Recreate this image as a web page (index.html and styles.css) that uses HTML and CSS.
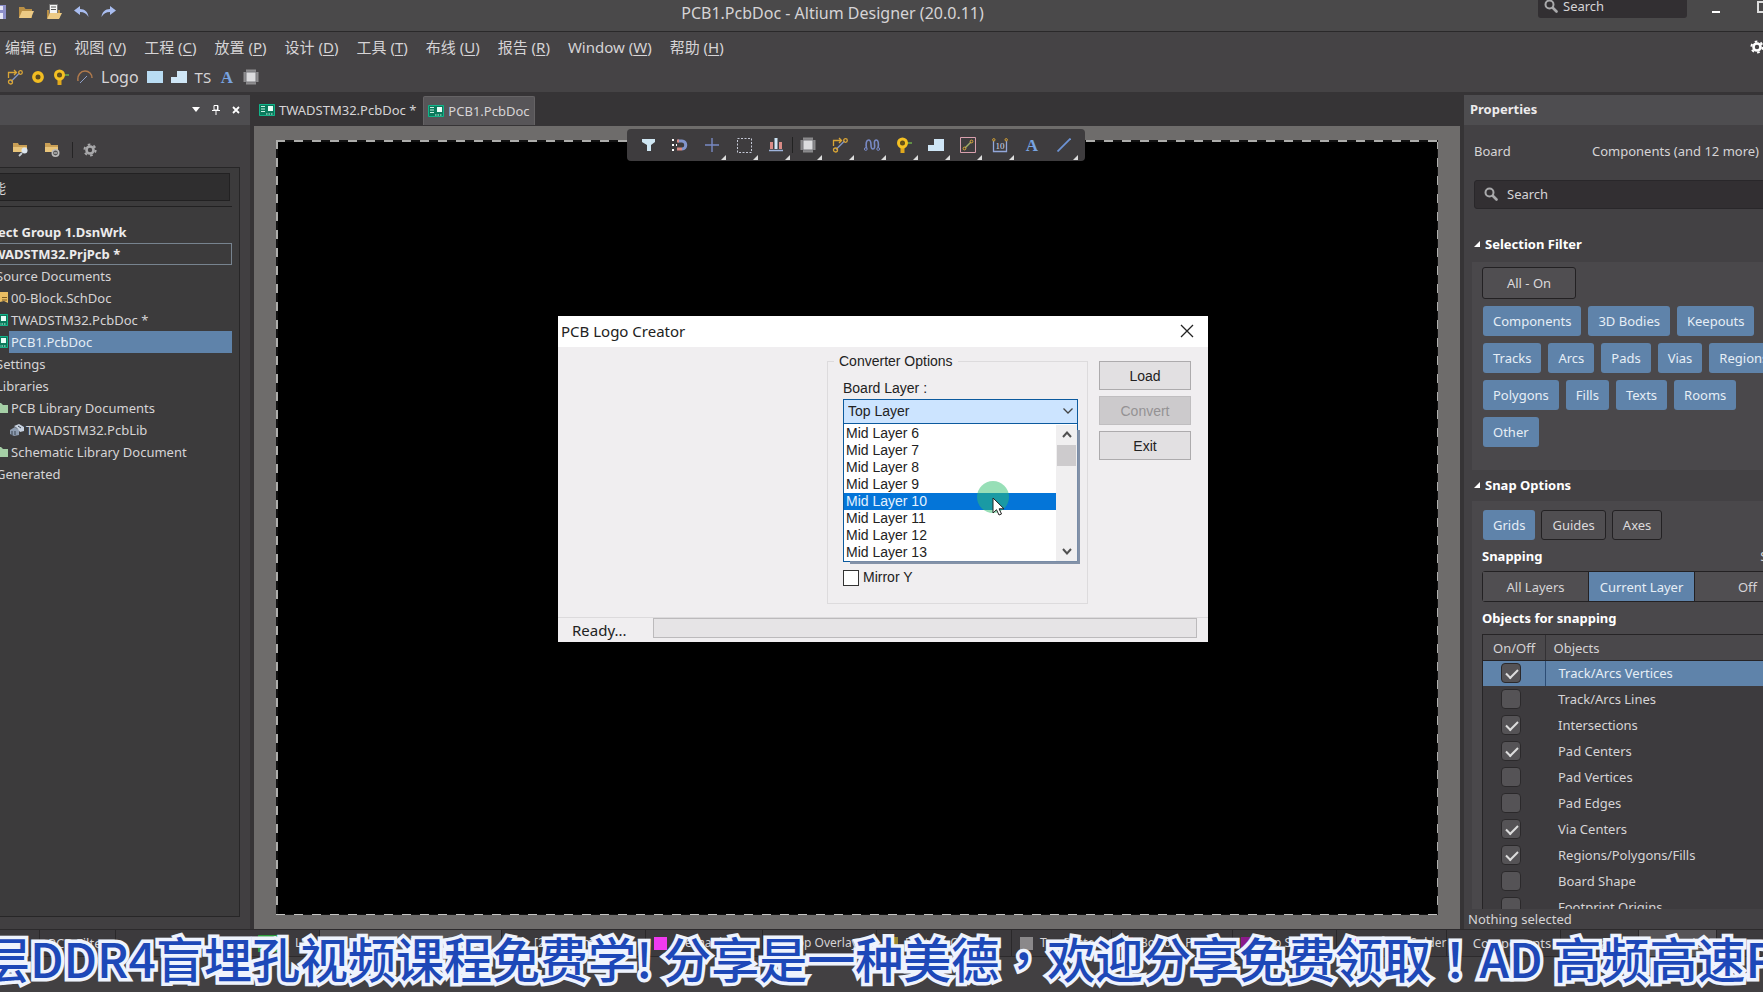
FILE: index.html
```html
<!DOCTYPE html>
<html lang="zh-CN">
<head>
<meta charset="utf-8">
<title>PCB1.PcbDoc - Altium Designer (20.0.11)</title>
<link rel="stylesheet" href="styles.css">
</head>
<body>
<svg class="defs" aria-hidden="true">
  <symbol id="pcb" viewBox="0 0 16 12"><path fill="#0b7a5c" d="M0 0h16v12H0z"/><path stroke="#c9f3e4" d="M2 2.500h4M2 5h4M2 7.500h4M7 10h1.500M9.500 10H11M12 10h1.500"/><path fill="#e8fff8" d="M9 2h5v5H9z"/><path fill="none" stroke="#12b48a" d="M.5.500h15v11H.5z"/></symbol>
  <symbol id="folder" viewBox="0 0 16 14"><path fill="#b98f45" d="M1 2h5l1.500 2H14v9H1z"/><path fill="#ecca85" d="M4 6h12l-3 7H1z"/></symbol>
  <symbol id="route" viewBox="0 0 16 16"><path fill="none" stroke="#d9a536" stroke-width="1.300" d="M1.500 9V3.500H9M7 1l2.500 2.500L7 6"/><path stroke="#7f93c4" stroke-width="1.500" d="M4 12.500 12.500 4"/><circle cx="3.500" cy="13" r="2" fill="none" stroke="#d9a536" stroke-width="1.300"/><circle cx="13.500" cy="3.500" r="1.800" fill="none" stroke="#d9a536" stroke-width="1.300"/></symbol>
  <symbol id="pad" viewBox="0 0 16 16"><path stroke="#6fae4a" stroke-width="1.500" d="M10 6h6"/><path fill="#e0a81c" d="M4.500 8h4v8h-4z"/><circle cx="6.500" cy="6" r="4" fill="#5a4a20" stroke="#f4c022" stroke-width="3"/><circle cx="6.500" cy="6" r="1.500" fill="#6b5413"/></symbol>
  <symbol id="via" viewBox="0 0 14 14"><circle cx="7" cy="7" r="4.200" fill="#5a4a20" stroke="#f2bd22" stroke-width="3.400"/></symbol>
  <symbol id="chip" viewBox="0 0 16 16"><path stroke="#d8d8da" stroke-width="1" d="M4 .5v15M6 .5v15M8 .5v15M10 .5v15M12 .5v15M.5 4h15M.5 6h15M.5 8h15M.5 10h15M.5 12h15"/><path fill="#dcdcde" stroke="#77777a" d="M3 3h10v10H3z"/></symbol>
  <symbol id="region" viewBox="0 0 16 12"><path fill="#cfe6f6" d="M6 0h10v12H0V6h6z"/></symbol>
  <symbol id="letter" viewBox="0 0 16 16"><text x="8" y="14" text-anchor="middle" class="glyph-a">A</text></symbol>
  <symbol id="lens" viewBox="0 0 14 14"><circle cx="5.500" cy="5.500" r="4" fill="none" stroke="#a9a9ab" stroke-width="2"/><path stroke="#a9a9ab" stroke-width="2.600" stroke-linecap="round" d="m9 9 3.500 3.500"/></symbol>
  <symbol id="gear" viewBox="0 0 14 14"><circle cx="7" cy="7" r="3.500" fill="none" stroke="currentColor" stroke-width="2.600"/><circle cx="7" cy="7" r="5.600" fill="none" stroke="currentColor" stroke-width="2" stroke-dasharray="2.600 3.264"/></symbol>
  <symbol id="fold" viewBox="0 0 6 6"><path fill="#fff" d="M6 0v6H0z"/></symbol>
</svg>

<header class="titlebar">
  <div class="quick">
    <button aria-label="Save"><svg width="14" height="14" viewBox="0 0 14 14"><path fill="#8d8fc9" d="M0 0h14v14H0z"/><path fill="#e6e6f5" d="M3 1h8v4H3zM3 8h3v6H3zM8 8h3v6H8z"/></svg></button>
    <button aria-label="Open"><svg width="16" height="14"><use href="#folder"/></svg></button>
    <button aria-label="Open project"><svg width="16" height="15" viewBox="0 0 16 15"><path fill="#b98f45" d="M1 6h13v8H1z"/><path fill="#f4f4f4" stroke="#777" d="M3.500.500h8v9h-8z"/><path stroke="#555" d="M5 3h5M5 5.500h5"/><path fill="#ecca85" d="M4 9h12l-3 6H1z"/></svg></button>
    <button aria-label="Undo"><svg width="15" height="12" viewBox="0 0 15 12"><path fill="#a9bdf0" d="M0 4.500 6 0v3c5 0 8 3 8.500 8C12.500 7.500 10 6 6 6v3z"/></svg></button>
    <button aria-label="Redo"><svg width="15" height="12" viewBox="0 0 15 12"><path fill="#a9bdf0" d="M15 4.500 9 0v3c-5 0-8 3-8.500 8C2.500 7.500 5 6 9 6v3z"/></svg></button>
  </div>
  <h1 class="app-title">PCB1.PcbDoc - Altium Designer (20.0.11)</h1>
  <div class="window-tools">
    <label class="top-search"><svg width="14" height="14"><use href="#lens"/></svg><input type="text" placeholder="Search" aria-label="Search"></label>
    <button class="minimise" aria-label="Minimise"></button>
    <button class="maximise" aria-label="Maximise"></button>
  </div>
</header>

<nav class="menubar">
  <button>编辑 (<u>E</u>)</button><button>视图 (<u>V</u>)</button><button>工程 (<u>C</u>)</button><button>放置 (<u>P</u>)</button><button>设计 (<u>D</u>)</button><button>工具 (<u>T</u>)</button><button>布线 (<u>U</u>)</button><button>报告 (<u>R</u>)</button><button>Window (<u>W</u>)</button><button>帮助 (<u>H</u>)</button>
  <button class="settings" aria-label="Settings"><svg width="14" height="14"><use href="#gear"/></svg></button>
</nav>

<div class="toolbar">
  <button aria-label="Route"><svg width="16" height="16"><use href="#route"/></svg></button>
  <button aria-label="Via"><svg width="14" height="14"><use href="#via"/></svg></button>
  <button aria-label="Pad"><svg width="16" height="16"><use href="#pad"/></svg></button>
  <button aria-label="Arc"><svg width="16" height="14" viewBox="0 0 16 14"><path fill="none" stroke="#b07a4c" stroke-width="1.500" d="M1 11C0 5 4 1 8 1s7 3 7 7"/><path stroke="#8fa0c8" d="m3 13 7-7"/></svg></button>
  <button class="logo-label">Logo</button>
  <button aria-label="Fill"><svg width="16" height="12"><path fill="#b9dcf3" d="M0 0h16v12H0z"/></svg></button>
  <button aria-label="Polygon"><svg width="16" height="12"><use href="#region"/></svg></button>
  <button class="ts-label">TS</button>
  <button aria-label="Text"><svg width="16" height="16"><use href="#letter"/></svg></button>
  <button aria-label="Component"><svg width="16" height="16"><use href="#chip"/></svg></button>
</div>

<main class="workspace">
  <aside class="projects">
    <div class="panel-head panel-actions">
      <button aria-label="Panel menu"><svg width="8" height="6"><path fill="#fff" d="M0 0h8L4 5z"/></svg></button>
      <button aria-label="Pin"><svg width="8" height="10" viewBox="0 0 8 10"><path fill="none" stroke="#fff" d="M2 .5h4V5H2zM0 5.500h8M4 5.500V10M5.500 1v4"/></svg></button>
      <button aria-label="Close panel"><svg width="8" height="8"><path stroke="#fff" stroke-width="1.800" d="m1 1 6 6M7 1 1 7"/></svg></button>
    </div>
    <div class="project-tools">
      <button aria-label="Browse"><svg width="17" height="15" viewBox="0 0 17 15"><path fill="#c99f55" d="M1 1h5l1 2h8v7H1z"/><path fill="#e8c47a" d="M1 5h14v5H1z"/><circle cx="12.500" cy="8.500" r="3" fill="#dde6ee"/><path stroke="#c4ccd4" stroke-width="1.800" d="m10 11-3 3"/></svg></button>
      <button aria-label="Folder options"><svg width="17" height="16" viewBox="0 0 17 16"><path fill="#c99f55" d="M1 1h5l1 2h7v7H1z"/><path fill="#e8c47a" d="M1 5h13v5H1z"/><circle cx="11.500" cy="11" r="3.200" fill="#555" stroke="#bbb" stroke-width="1.600"/><path stroke="#ddd" d="M10 11h3"/></svg></button>
      <span class="tool-rule"></span>
      <button class="grey" aria-label="Options"><svg width="14" height="14"><use href="#gear"/></svg></button>
    </div>
    <div class="project-box">
      <input class="project-search" type="text" value="能" aria-label="搜索">
      <ul class="tree">
        <li class="strong">ect Group 1.DsnWrk</li>
        <li class="strong outlined">WADSTM32.PrjPcb *</li>
        <li>Source Documents</li>
        <li><svg width="12" height="12" viewBox="0 0 12 12"><path fill="#e9bd62" d="M0 0h12v11L8 9l-8 2z"/><path stroke="#7a5a20" d="M6 5.500h5M6 8h5"/></svg>00-Block.SchDoc</li>
        <li><svg width="12" height="12" viewBox="4 0 12 12"><use href="#pcb" width="16" height="12"/></svg>TWADSTM32.PcbDoc *</li>
        <li class="chosen"><svg width="12" height="12" viewBox="4 0 12 12"><use href="#pcb" width="16" height="12"/></svg><span>PCB1.PcbDoc</span></li>
        <li>Settings</li>
        <li>Libraries</li>
        <li><svg width="12" height="10"><path fill="#a5cfa6" d="M0 0h5l2 2h5v8H0z"/></svg>PCB Library Documents</li>
        <li class="nested"><svg width="14" height="12" viewBox="0 0 14 12"><path fill="#8e9cb0" d="m0 6 5-3 4 3v5l-5 1-4-2z"/><path fill="#c8d2e0" d="m4 2 5-2 5 3v4l-4 1-3-4z"/><path stroke="#39424f" d="M2 7v4M5 7v4M8 2l3 2"/></svg>TWADSTM32.PcbLib</li>
        <li><svg width="12" height="10"><path fill="#a5cfa6" d="M0 0h5l2 2h5v8H0z"/></svg>Schematic Library Document</li>
        <li>Generated</li>
      </ul>
    </div>
  </aside>

  <section class="editor">
    <div class="doc-tabs">
      <button><svg width="16" height="12"><use href="#pcb"/></svg>TWADSTM32.PcbDoc *</button>
      <button class="current"><svg width="16" height="12"><use href="#pcb"/></svg>PCB1.PcbDoc</button>
    </div>
    <div class="canvas">
      <div class="board"></div>

      <div class="floatbar">
        <button aria-label="Filter"><svg width="13" height="12"><path fill="#cfe6f2" d="M0 0h13v3L9 6v6H5V6L0 3z"/></svg></button>
        <button aria-label="Snap"><svg width="16" height="14" viewBox="0 0 16 14"><path fill="none" stroke="#8295cc" stroke-width="3" d="M6 3h4c5 0 5 8 0 8"/><path stroke="#d78a83" stroke-width="3" d="M5 11h5M5 3h2"/><path fill="#fff" d="M0 1h2v2H0zM0 6h2v2H0zM0 11h2v2H0zM4 6h1v2H4z"/></svg></button>
        <button class="more" aria-label="Origin"><svg width="14" height="14"><path stroke="#7889c4" stroke-width="1.400" d="M7 0v14M0 7h14"/></svg></button>
        <button class="more" aria-label="Select area"><svg width="15" height="15"><path fill="none" stroke="#c5c8d6" stroke-dasharray="2 1.500" d="M.5.500h14v14H.5z"/></svg></button>
        <button class="more" aria-label="Align"><svg width="14" height="14"><path fill="#d98b86" d="M1 4h3v7H1zM10 4h3v7h-3z"/><path fill="#cfe6f6" d="M5.500 0h3v11h-3z"/><path stroke="#9fb4dc" stroke-width="1.500" d="M0 12.500h14"/></svg></button>
        <button class="more split" aria-label="Component"><svg width="16" height="16"><use href="#chip"/></svg></button>
        <button class="more" aria-label="Route"><svg width="16" height="16"><use href="#route"/></svg></button>
        <button class="more" aria-label="Tune"><svg width="16" height="12" viewBox="0 0 16 12"><path fill="none" stroke="#7889c4" stroke-width="1.600" d="M2.500 9.500C1.500 4 2.500 1 4.500 1S7 3 7 6s.5 4 2 4 2-2 1.500-5 .5-4 2-4 2.500 3 1.500 8"/><circle cx="1.800" cy="10" r="1.400" fill="none" stroke="#7889c4"/><circle cx="14.200" cy="10" r="1.400" fill="none" stroke="#7889c4"/></svg></button>
        <button class="more" aria-label="Pad"><svg width="16" height="16"><use href="#pad"/></svg></button>
        <button class="more" aria-label="Polygon"><svg width="16" height="12"><use href="#region"/></svg></button>
        <button class="more" aria-label="Keepout"><svg width="16" height="16"><path fill="none" stroke="#d9a0ae" d="M.5.500h15v15H.5z"/><path stroke="#9fae6a" stroke-width="1.400" d="m5 11 6-6"/><circle cx="4.500" cy="11.500" r="1.400" fill="none" stroke="#d9a536"/><circle cx="11.500" cy="4.500" r="1.400" fill="none" stroke="#d9a536"/></svg></button>
        <button class="more" aria-label="Dimension"><svg width="16" height="15" viewBox="0 0 16 15"><path fill="none" stroke="#93a7da" stroke-width="1.300" d="M1.500 3v10.500h13V3"/><circle cx="1.800" cy="1.800" r="1.200" fill="none" stroke="#d9a536"/><circle cx="14.200" cy="1.800" r="1.200" fill="none" stroke="#d9a536"/><text x="8" y="11" text-anchor="middle" class="glyph-ten">10</text></svg></button>
        <button aria-label="Text"><svg width="16" height="16"><use href="#letter"/></svg></button>
        <button class="more" aria-label="Line"><svg width="14" height="14"><path stroke="#6d93d6" stroke-width="1.800" d="M.5 13.500 13.500.500"/></svg></button>
      </div>

      <div class="dialog" role="dialog" aria-label="PCB Logo Creator">
        <div class="dialog-title"><span>PCB Logo Creator</span><button aria-label="Close"><svg width="14" height="14"><path stroke="#222" stroke-width="1.300" d="m1 1 12 12M13 1 1 13"/></svg></button></div>
        <div class="dialog-body">
          <fieldset>
            <legend>Converter Options</legend>
            <label for="layer">Board Layer :</label>
            <div class="combo">
              <select id="layer"><option>Top Layer</option></select>
              <svg class="combo-arrow" width="10" height="6"><path fill="none" stroke="#444" stroke-width="1.300" d="m.5.500 4.500 4.500L9.500.500"/></svg>
              <div class="drop">
                <ul role="listbox" aria-label="Board Layer">
                  <li>Mid Layer 6</li><li>Mid Layer 7</li><li>Mid Layer 8</li><li>Mid Layer 9</li><li class="hot">Mid Layer 10</li><li>Mid Layer 11</li><li>Mid Layer 12</li><li>Mid Layer 13</li>
                </ul>
                <div class="scroll">
                  <svg width="10" height="7"><path fill="none" stroke="#505050" stroke-width="2" d="m1 6 4-4.500L9 6"/></svg>
                  <span class="thumb"></span>
                  <svg class="down" width="10" height="7"><path fill="none" stroke="#505050" stroke-width="2" d="m1 1 4 4.500L9 1"/></svg>
                </div>
                <span class="click-halo"></span>
                <svg class="pointer" width="13" height="19" viewBox="0 0 13 19"><path fill="#fff" stroke="#222" d="M1 1v15l3.500-3.300L7 18l2.500-1-2.400-5.200H12z"/></svg>
              </div>
            </div>
            <label class="mirror"><input type="checkbox">Mirror Y</label>
          </fieldset>
          <div class="dialog-buttons"><button>Load</button><button disabled>Convert</button><button>Exit</button></div>
        </div>
        <div class="dialog-status"><span>Ready...</span><div class="progress" role="progressbar" aria-label="Progress"></div></div>
      </div>
    </div>
  </section>

  <aside class="properties">
    <h2 class="panel-head">Properties</h2>
    <div class="prop-scope"><span>Board</span><span>Components (and 12 more)</span></div>
    <label class="prop-search"><svg width="14" height="14"><use href="#lens"/></svg><input type="text" placeholder="Search" aria-label="Search properties"></label>
    <h3><svg width="6" height="6"><use href="#fold"/></svg>Selection Filter</h3>
    <div class="group filter">
      <button class="chip off wide">All - On</button>
      <div class="chips"><button class="chip">Components</button><button class="chip">3D Bodies</button><button class="chip">Keepouts</button></div>
      <div class="chips"><button class="chip">Tracks</button><button class="chip">Arcs</button><button class="chip">Pads</button><button class="chip">Vias</button><button class="chip">Regions</button></div>
      <div class="chips"><button class="chip">Polygons</button><button class="chip">Fills</button><button class="chip">Texts</button><button class="chip">Rooms</button></div>
      <div class="chips"><button class="chip">Other</button></div>
    </div>
    <h3><svg width="6" height="6"><use href="#fold"/></svg>Snap Options</h3>
    <div class="group snap">
      <div class="chips"><button class="chip">Grids</button><button class="chip off">Guides</button><button class="chip off">Axes</button></div>
      <div class="snap-head"><h4>Snapping</h4><span>Shift</span></div>
      <div class="segments"><button>All Layers</button><button class="on">Current Layer</button><button>Off</button></div>
      <h4>Objects for snapping</h4>
      <div class="table-wrap">
        <table>
          <thead><tr><th>On/Off</th><th>Objects</th></tr></thead>
          <tbody>
            <tr class="picked"><td><input id="o1" type="checkbox" checked></td><td><label for="o1">Track/Arcs Vertices</label></td></tr>
            <tr><td><input id="o2" type="checkbox"></td><td><label for="o2">Track/Arcs Lines</label></td></tr>
            <tr><td><input id="o3" type="checkbox" checked></td><td><label for="o3">Intersections</label></td></tr>
            <tr><td><input id="o4" type="checkbox" checked></td><td><label for="o4">Pad Centers</label></td></tr>
            <tr><td><input id="o5" type="checkbox"></td><td><label for="o5">Pad Vertices</label></td></tr>
            <tr><td><input id="o6" type="checkbox"></td><td><label for="o6">Pad Edges</label></td></tr>
            <tr><td><input id="o7" type="checkbox" checked></td><td><label for="o7">Via Centers</label></td></tr>
            <tr><td><input id="o8" type="checkbox" checked></td><td><label for="o8">Regions/Polygons/Fills</label></td></tr>
            <tr><td><input id="o9" type="checkbox"></td><td><label for="o9">Board Shape</label></td></tr>
            <tr><td><input id="o10" type="checkbox"></td><td><label for="o10">Footprint Origins</label></td></tr>
          </tbody>
        </table>
      </div>
    </div>
    <p class="selected-note">Nothing selected</p>
  </aside>
</main>

<footer class="bottom">
  <div class="bottom-tabs">
    <div class="left-tabs"><button></button><button>PCB Filter</button></div>
    <div class="layer-tabs">
      <button class="layer-set"><i class="green"></i>LS</button>
      <button class="layer-top current">[1] Top Layer</button>
      <button class="layer-bottom">[2] Bottom Layer</button>
      <button class="layer-mech"><i class="magenta"></i>Mechanical 1</button>
      <button class="layer-over"><i class="yellow"></i>Top Overlay</button>
      <button class="layer-bover"><i class="olive"></i>Bottom Overlay</button>
      <button class="layer-paste"><i class="gray"></i>Top Paste</button>
      <button class="layer-bpaste"><i class="maroon"></i>Bottom Paste</button>
      <button class="layer-solder"><i class="purple"></i>Top Solder</button>
      <button class="layer-bsolder"><i class="magenta"></i>Bottom Solder</button>
    </div>
    <div class="right-tabs"><button>Components</button><button>Messages</button><button class="current">Properties</button><button></button></div>
  </div>
</footer>

<div class="caption">层DDR4盲埋孔视频课程免费学! 分享是一种美德<span lang="zh-TW">，</span>欢迎分享免费领取<span lang="zh-TW">！</span>AD 高频高速PCB</div>
</body>
</html>
```
FILE: styles.css
```css
* { box-sizing: border-box; }
body {
  margin: 0;
  height: 100vh;
  display: flex;
  flex-direction: column;
  position: relative;
  overflow: hidden;
  background: #454345;
  color: #d6d4d6;
  font: 13px/20px "Noto Sans", "Noto Sans CJK SC", sans-serif;
  white-space: nowrap;
}
button {
  margin: 0;
  padding: 0;
  border: 0;
  background: none;
  color: inherit;
  font: inherit;
  display: flex;
  align-items: center;
  justify-content: center;
  flex: none;
}
input { font: inherit; color: inherit; }
svg { flex: none; display: block; }
ul { margin: 0; padding: 0; list-style: none; }
h1, h2, h3, h4, p { margin: 0; font: inherit; }
.defs { position: absolute; width: 0; height: 0; }
.glyph-a { font: bold 17px "Liberation Serif", serif; fill: #78a4e0; }
.glyph-ten { font: 9px "Liberation Serif", serif; fill: #d4dcf0; }

/* Title bar */
.titlebar {
  flex: none;
  height: 32px;
  display: grid;
  grid-template-columns: 1fr auto 1fr;
  background: #4a494a;
  border-bottom: 1px solid #2a292a;
}
.quick { display: flex; align-items: center; gap: 12px; margin-left: -8px; padding-bottom: 8px; }
.app-title { font-size: 16px; line-height: 26px; padding-right: 98px; }
.window-tools { display: flex; justify-content: flex-end; align-items: flex-start; }
.top-search {
  display: flex;
  align-items: center;
  gap: 5px;
  width: 149px;
  height: 18px;
  padding: 0 6px 6px;
  background: #322f32;
  border-radius: 0 0 3px 3px;
}
.top-search input, .prop-search input {
  width: 100px;
  padding: 0;
  border: 0;
  outline: 0;
  background: none;
}
input::placeholder { color: #d6d4d6; opacity: 1; }
.minimise { width: 8px; height: 2px; background: #fff; margin: 11px 37px 0 25px; }
.maximise { width: 12px; height: 12px; border: 2px solid #ddd; margin: 1px -6px 0 0; }

/* Menus */
.menubar { flex: none; height: 31px; display: flex; align-items: center; gap: 18px; padding: 0 0 2px 5px; font-size: 15px; }
.menubar u { text-underline-offset: 2px; }
.settings { margin-left: auto; margin-right: -1px; color: #fff; }
.toolbar { flex: none; height: 32px; display: flex; align-items: center; gap: 8px; padding: 0 0 2px 7px; font-size: 15px; border-bottom: 3px solid #363436; }
.logo-label { font-size: 16px; }

/* Workspace */
.workspace { flex: 1; min-height: 0; display: flex; background: #363436; }
.panel-head { height: 30px; background: #4e4d50; flex: none; }
.projects { flex: none; width: 250px; margin-right: 4px; display: flex; flex-direction: column; background: #413f41; overflow: hidden; }
.panel-actions { display: flex; align-items: center; justify-content: flex-end; gap: 12px; padding-right: 10px; }
.project-tools { height: 42px; display: flex; align-items: center; gap: 15px; padding: 7px 0 0 12px; }
.tool-rule { width: 1px; height: 16px; background: #252425; margin: 0 -5px 0 -4px; }
.grey { color: #a8a8aa; }
.project-box { flex: 1; margin: 0 10px 12px 0; border: 1px solid #272627; border-left: 0; background: #3c3b3c; }
.project-search { display: block; width: 231px; height: 28px; margin-top: 5px; margin-left: -1px; padding: 0; border: 1px solid #222122; background: #2f2e2f; text-indent: -7px; }
.tree { margin: 5px 7px 0 0; padding-top: 14px; border-top: 1px solid #222122; }
.tree li { display: flex; align-items: center; height: 22px; gap: 3px; margin-left: -4px; }
.tree .strong { font-weight: bold; color: #ecebec; margin-left: -2px; }
.tree .outlined { border: 1px solid #77838f; text-indent: -6px; }
.tree .nested { padding-left: 14px; gap: 2px; }
.tree .chosen { gap: 1px; }
.chosen span { flex: 1; padding-left: 2px; line-height: 22px; background: #5f83aa; color: #e4edf6; }

/* Editor */
.editor { flex: 1; min-width: 0; display: flex; flex-direction: column; }
.doc-tabs { flex: none; height: 31px; display: flex; align-items: stretch; gap: 2px; padding: 1px 0 1px 5px; }
.doc-tabs button { gap: 4px; padding: 0 5px 2px 0; }
.doc-tabs .current { padding: 0 4px 1px; background: #575558; border: 1px solid #656365; border-radius: 2px 2px 0 0; border-bottom: 0; }
.canvas { flex: 1; min-height: 0; position: relative; padding: 14px 22px 14px 22px; background: #6e6c6b; display: flex; }
.board {
  flex: 1;
  background:
    repeating-linear-gradient(90deg, #adadab 0 9px, #111 9px 18px) top / 100% 2px no-repeat,
    repeating-linear-gradient(90deg, #c4c4c2 0 9px, #111 9px 18px) bottom / 100% 1px no-repeat,
    repeating-linear-gradient(180deg, #adadab 0 9px, #111 9px 18px) left / 2px 100% no-repeat,
    repeating-linear-gradient(180deg, #adadab 0 9px, #111 9px 18px) right / 1px 100% no-repeat,
    #000;
}
.floatbar { position: absolute; left: 373px; top: 3px; display: flex; padding: 0 5px; height: 32px; background: #3e3c3e; border-radius: 4px; }
.floatbar button { position: relative; width: 32px; height: 32px; }
.floatbar .more::after { content: ""; position: absolute; right: 2px; bottom: 1px; border: solid transparent; border-width: 0 0 5px 5px; border-bottom-color: #ddd; }
.floatbar .split::before { content: ""; position: absolute; left: 0; top: 8px; width: 1px; height: 16px; background: #222; }

/* Dialog */
.dialog { position: absolute; left: 304px; top: 190px; width: 650px; background: #f0eef0; color: #222; font: 14px/17px "Liberation Sans", Arial, sans-serif; }
.dialog-title { display: flex; justify-content: space-between; align-items: center; height: 31px; padding: 0 14px 2px 3px; background: #fff; font: 15px/20px "Noto Sans", sans-serif; }
.dialog-body { display: flex; justify-content: flex-end; align-items: flex-start; gap: 11px; height: 270px; padding: 6px 17px 0 0; }
fieldset { width: 260px; height: 251px; margin: 0; padding: 9px 9px 0 15px; border: 1px solid #dddbdd; }
legend { padding: 0 5px; margin-left: -9px; }
fieldset label { display: block; line-height: 19px; }
.combo { position: relative; width: 235px; margin-top: 1px; }
.combo select { display: block; appearance: none; width: 100%; height: 25px; padding: 0 4px; border: 1px solid #0c5a9e; border-radius: 0; background: #cce4ff; font: inherit; color: #222; outline: 0; }
.combo-arrow { position: absolute; right: 5px; top: 9px; }
.drop { position: absolute; z-index: 1; left: 0; top: 24px; width: 100%; display: flex; padding-top: 1px; background: #fff; border: 1px solid #0c5a9e; }
.drop::before { content: ""; position: absolute; z-index: -1; left: 6px; top: 6px; right: -3px; bottom: -3px; box-shadow: inset -3px -3px 1px #8492a8; }
.drop ul { flex: 1; background: #fff; }
.drop li { padding-left: 2px; }
.hot { background: #0475d8; color: #e4f2ff; }
.scroll { width: 21px; display: flex; flex-direction: column; align-items: center; padding: 6px 0; background: #f0eff0; }
.thumb { width: 19px; height: 21px; margin-top: 7px; background: #cdcbcd; }
.down { margin-top: auto; }
.click-halo { position: absolute; left: 133px; top: 57px; width: 32px; height: 32px; border-radius: 50%; background: #30c07080; }
.pointer { position: absolute; left: 148px; top: 73px; }
fieldset .mirror { display: flex; align-items: center; gap: 4px; margin-top: 144px; }
.mirror input { appearance: none; width: 16px; height: 16px; margin: 0; border: 1px solid #333; background: #fff; }
.dialog-buttons { display: flex; flex-direction: column; gap: 6px; padding-top: 8px; }
.dialog-buttons button { width: 92px; height: 29px; padding-top: 1px; border: 1px solid #adabad; background: #e2e0e2; }
.dialog-buttons button:disabled { background: #cccacc; border-color: #c0bec0; color: #949294; }
.dialog-status { display: flex; align-items: center; height: 25px; border-top: 1px solid #dcdadc; padding-right: 11px; font: 15px/20px "Noto Sans", sans-serif; }
.dialog-status span { width: 95px; padding-left: 14px; }
.progress { flex: 1; height: 20px; margin-bottom: 4px; border: 1px solid #bcbabc; background: #e6e4e6; }

/* Properties */
.properties { flex: none; width: 299px; margin-left: 4px; display: flex; flex-direction: column; overflow: hidden; background: #434144; }
.properties .panel-head { font-weight: bold; line-height: 28px; padding-left: 6px; color: #ecebec; }
.prop-scope { display: flex; justify-content: space-between; padding: 16px 4px 0 10px; flex: none; }
.prop-search { display: flex; align-items: center; gap: 9px; flex: none; height: 29px; margin: 19px -8px 0 10px; padding: 0 9px 1px; background: #322f32; border: 1px solid #29272a; border-radius: 3px; }
h3, h4 { font-weight: bold; color: #fff; }
.properties h3 { display: flex; align-items: center; gap: 5px; flex: none; height: 20px; padding-left: 10px; margin-top: 25px; }
.group { margin-left: 8px; background: #4a484b; }
.filter { height: 208px; margin-top: 8px; padding: 5px 0 0 11px; flex: none; display: flex; flex-direction: column; align-items: flex-start; gap: 7px; }
.chips { display: flex; gap: 7px; }
.chip { height: 30px; padding: 0 10px 1px; border-radius: 3px; background: #5f83aa; color: #e6eef6; }
.chip.off { border: 1px solid #232123; background: #504e51; color: #dcdadc; }
.wide { width: 94px; height: 32px; margin-left: -1px; }
.properties .filter + h3 { margin-top: 5px; }
.snap { flex: 1; min-height: 0; margin-top: 6px; padding: 9px 0 0 10px; display: flex; flex-direction: column; }
.snap .chips { gap: 6px; padding-left: 1px; flex: none; }
.snap-head { display: flex; flex: none; justify-content: space-between; margin: 6px -25px 0 0; }
.segments { display: flex; flex: none; width: 320px; height: 31px; margin: 5px 0 6px; border: 1px solid #232123; border-radius: 3px; }
.segments button { flex: 1; background: #504e51; border-right: 1px solid #232123; }
.segments .on { background: #5f83aa; color: #e6eef6; }
.table-wrap { flex: 1; min-height: 0; width: 320px; margin-top: 6px; overflow: hidden; border: 1px solid #262426; border-bottom: 0; background: #3d3b3e; }
table { width: 100%; border-collapse: collapse; table-layout: fixed; }
th { height: 25px; padding: 2px 0 0 8px; font-weight: normal; text-align: left; background: #4a484b; border-bottom: 1px solid #262426; }
th:first-child { width: 62px; padding-left: 10px; border-right: 1px solid #333134; }
td { height: 26px; padding: 0 0 0 13px; }
td:first-child { padding: 0 0 0 18px; }
.picked td { background: #5f83aa; color: #e6eef6; height: 26px; }
.picked td:first-child { border-right: 1px solid #2d4d75; }
td input { display: block; appearance: none; width: 20px; height: 20px; margin: 0; border: 1px solid #2b292b; border-radius: 4px; background: #555356; }
td input:checked::after { content: ""; display: block; width: 10px; height: 5px; margin: 5px 0 0 4px; border: solid #ddd; border-width: 0 0 2px 2px; transform: rotate(-45deg); }
.selected-note { flex: none; height: 20px; padding-left: 4px; }

/* Bottom strip */
.bottom { flex: none; height: 63px; background: #424042; }
.bottom-tabs { display: flex; height: 28px; background: #3c3a3d; border-bottom: 1px solid #2c2a2c; border-top: 1px solid #2c2a2c; }
.bottom button { border-right: 1px solid #2a282a; }
.bottom .current { background: #565457; }
.left-tabs { width: 254px; display: flex; flex: none; }
.left-tabs button { width: 40px; }
.left-tabs button + button { width: 76px; }
.layer-tabs { flex: 1; min-width: 0; display: flex; overflow: hidden; font-size: 12px; }
.layer-tabs button { gap: 7px; justify-content: flex-start; padding-left: 8px; }
.layer-tabs i { width: 13px; height: 13px; flex: none; }
.layer-tabs .layer-set { width: 66px; padding-left: 4px; }
.layer-set .green { width: 30px; height: 17px; }
.layer-tabs .layer-top { width: 182px; padding-left: 90px; }
.layer-tabs .layer-bottom { width: 144px; padding-left: 32px; }
.layer-mech { width: 117px; }
.layer-over { width: 114px; }
.layer-bover { width: 135px; }
.layer-paste { width: 100px; }
.layer-bpaste { width: 121px; }
.layer-solder { width: 104px; }
.green { background: #2b9a3a; }
.magenta { background: #f03af0; }
.yellow { background: #e8dc40; }
.olive { background: #9a8a34; }
.gray { background: #8a888a; }
.maroon { background: #8a3030; }
.purple { background: #8a1a8a; }
.right-tabs { width: 299px; display: flex; flex: none; overflow: hidden; }
.right-tabs button { width: 78px; overflow: hidden; }
.right-tabs button:first-child { width: 97px; }

.caption {
  position: absolute;
  left: -18px;
  bottom: -1px;
  color: #1d48b8;
  font: 500 48px/72px "Noto Sans CJK SC", sans-serif;
  -webkit-text-stroke: 7px #eef3fd;
  paint-order: stroke fill;
}
.caption span { font-family: "Noto Sans CJK TC", sans-serif; }
```
